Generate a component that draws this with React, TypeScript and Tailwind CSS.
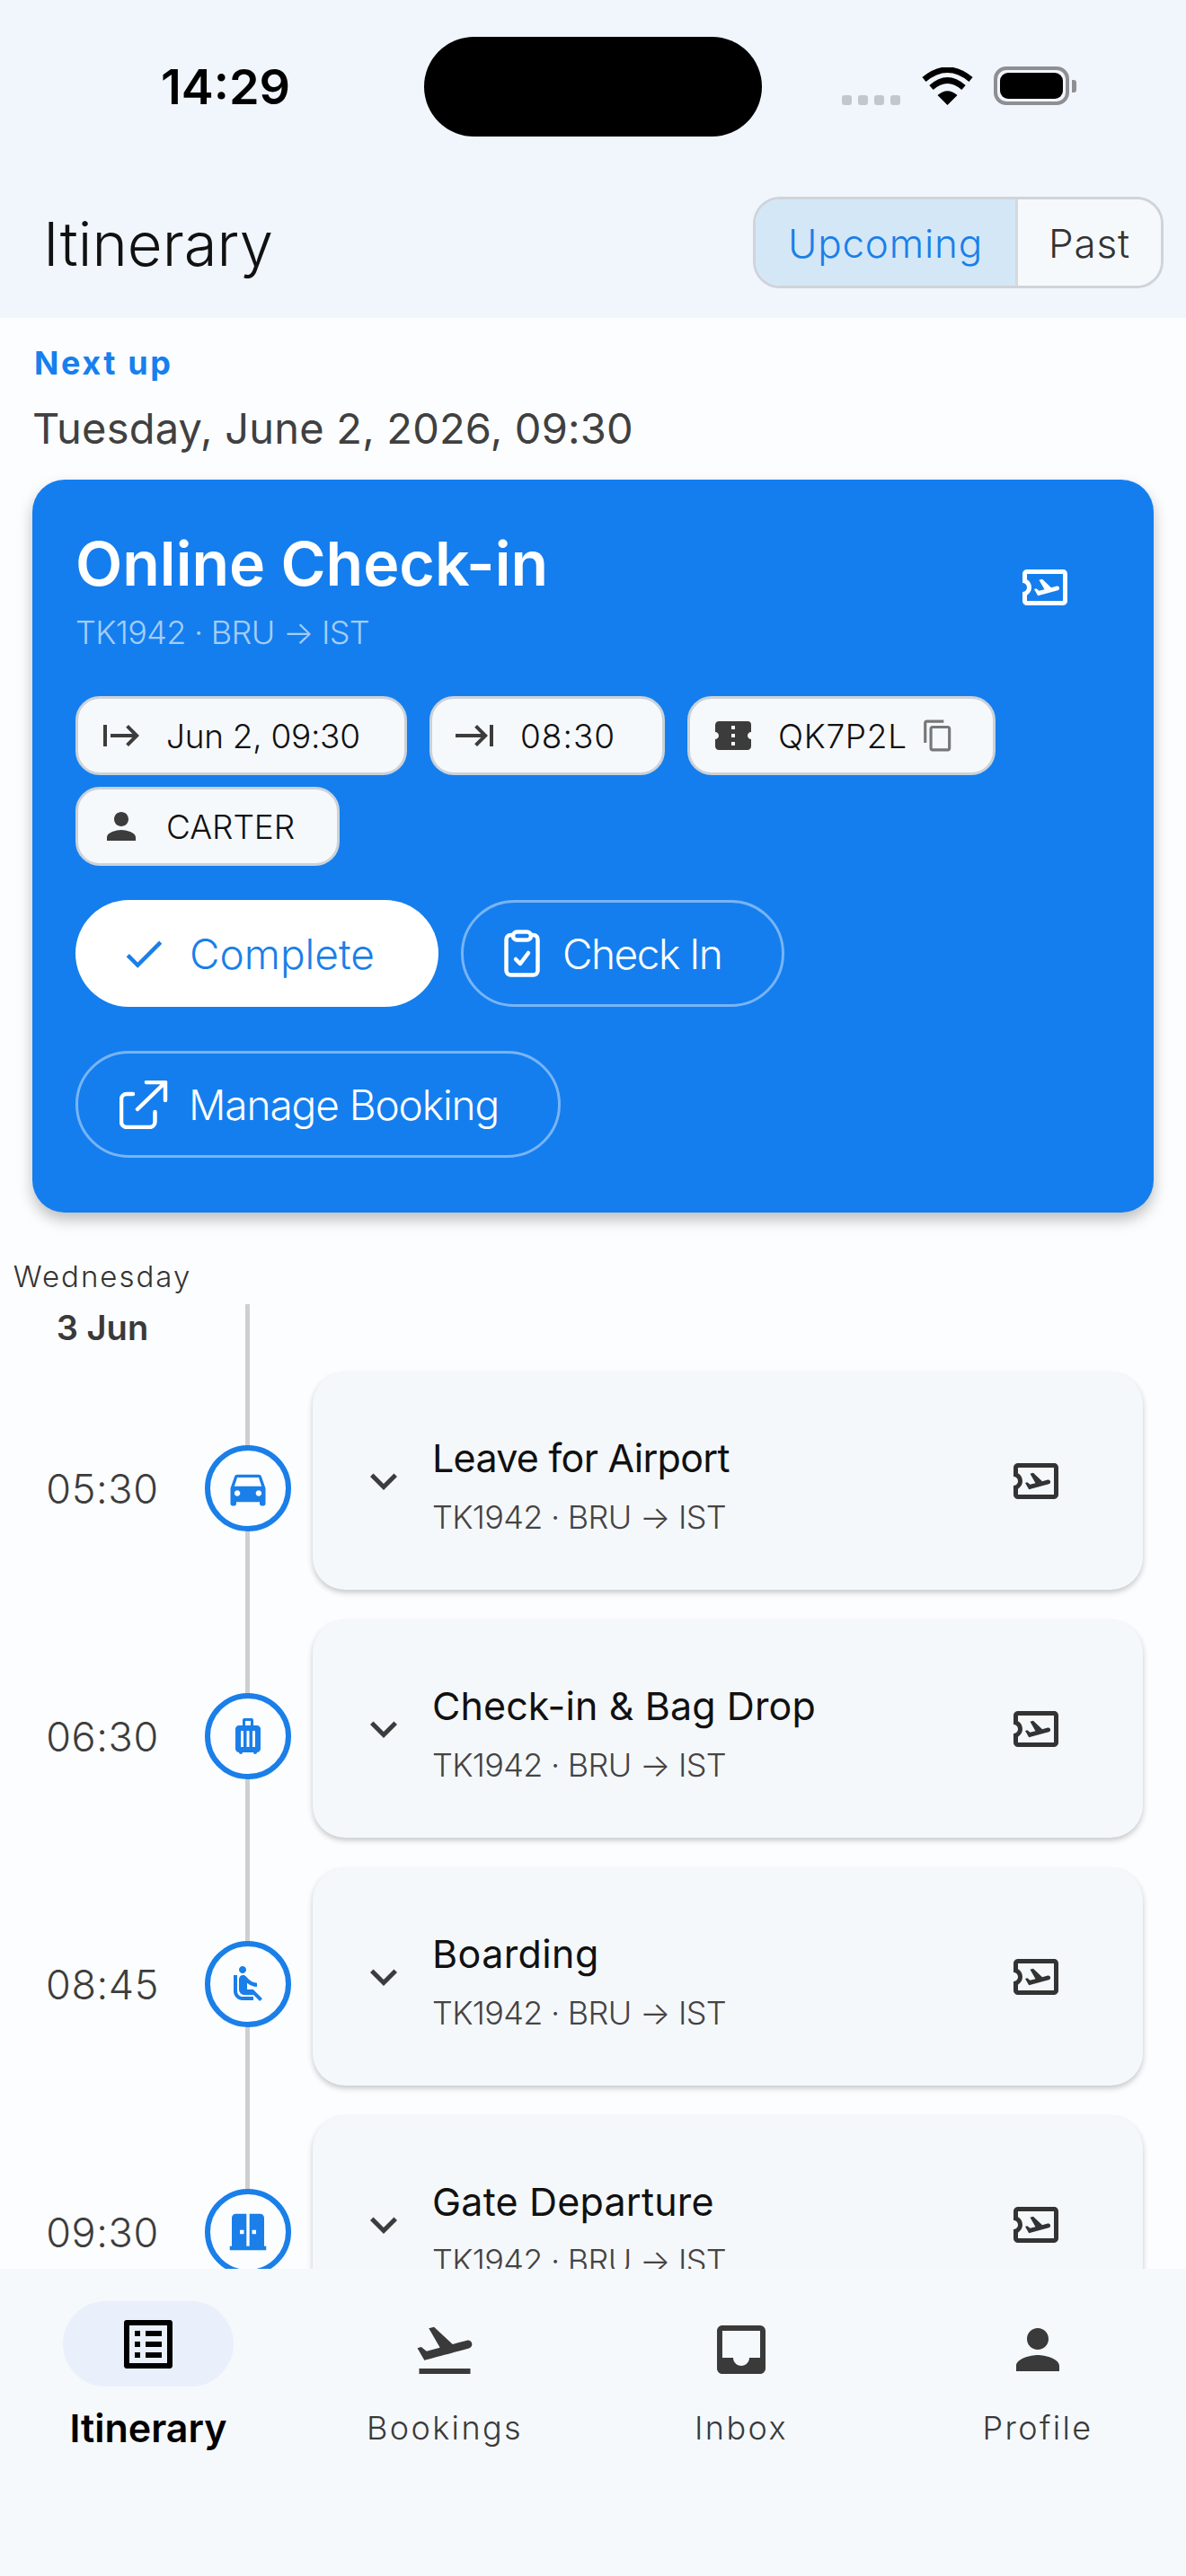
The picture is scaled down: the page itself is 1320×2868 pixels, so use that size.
import React from "react";
import {
  MdOutlineAirplaneTicket, MdStart, MdKeyboardTab, MdConfirmationNumber, MdOutlineContentCopy, MdPerson, MdCheck,
  MdKeyboardArrowDown, MdDirectionsCar, MdLuggage, MdAirlineSeatReclineNormal, MdDoorSliding, MdOutlineListAlt, MdFlightTakeoff, MdInbox,
} from "react-icons/md";

const font = { fontFamily: "Inter, 'Noto Sans', sans-serif" };

function Chip({ icon, text, width, track, extra }: { icon: React.ReactNode; text: string; width: string; track: string; extra?: React.ReactNode }) {
  return (
    <div className={`flex h-[88px] items-center gap-[26px] rounded-[27px] border-[3px] border-[#cbd2d9] bg-[#f6f9fc] pl-[24px] text-[37px] font-light text-[#111] ${width}`}>
      <span className="text-[#3c3c3c]">{icon}</span>
      <span className={`pt-[2px] ${track}`}>{text}</span>
      {extra}
    </div>
  );
}

const stops = [
  { time: "05:30", title: "Leave for Airport", track: "tracking-[-0.7px]", icon: <MdDirectionsCar size={52} /> },
  { time: "06:30", title: "Check-in & Bag Drop", track: "tracking-[0.1px]", icon: <MdLuggage size={48} /> },
  { time: "08:45", title: "Boarding", track: "tracking-[0.4px]", icon: <MdAirlineSeatReclineNormal size={48} /> },
  { time: "09:30", title: "Gate Departure", track: "tracking-[0.2px]", icon: <MdDoorSliding size={54} /> },
];

function Stop({ s }: { s: (typeof stops)[number] }) {
  return (
    <div className="flex items-center">
      <div className="mt-[15px] flex items-center">
        <div className="w-[228px] pt-[2px] text-center text-[45px] font-light leading-[56px] tracking-[0.6px] text-[#3d3d3d]">{s.time}</div>
        <div className="z-10 flex h-[96px] w-[96px] items-center justify-center rounded-full border-[6px] border-[#1a7fe8] bg-[#fcfdff] text-[#1a7fe8]">{s.icon}</div>
      </div>
      <div className="ml-[24px] flex h-[242px] w-[924px] shrink-0 items-center rounded-[36px] bg-[#f5f8fb] pl-[49px] pr-[89px] shadow-[0_3px_6px_rgba(0,0,0,0.22)]">
        <MdKeyboardArrowDown size={60} className="text-[#3c3c3c]" />
        <div className="ml-[24px] flex-1 pt-[9px]">
          <div className={`text-[43px] leading-[56px] text-[#111] ${s.track}`}>{s.title}</div>
          <div className="mt-[14px] text-[36px] font-light leading-[48px] tracking-[-0.7px] text-[#444]">TK1942 · BRU → IST</div>
        </div>
        <MdOutlineAirplaneTicket size={60} className="text-[#333]" />
      </div>
    </div>
  );
}

const tabs = [
  { label: "Itinerary", icon: <MdOutlineListAlt size={72} />, active: true },
  { label: "Bookings", icon: <MdFlightTakeoff size={72} /> },
  { label: "Inbox", icon: <MdInbox size={72} /> },
  { label: "Profile", icon: <MdPerson size={72} /> },
];

export default function App() {
  return (
    <div style={font} className="flex h-[2868px] w-[1320px] flex-col overflow-hidden bg-[#fcfdff]">
      <header className="h-[354px] shrink-0 bg-[#f1f6fc]">
        <div className="flex pt-[41px]">
          <div className="flex h-[111px] w-[472px] items-center justify-center pl-[30px] text-[54px] font-semibold text-black">14:29</div>
          <div className="h-[111px] w-[376px] rounded-[56px] bg-black" />
          <div className="flex h-[76px] items-end pl-[89px]">
            <div className="flex gap-[7px]">
              {[0, 1, 2, 3].map((i) => (
                <span key={i} className="h-[11px] w-[11px] rounded-[3px] bg-[#c3c7cc]" />
              ))}
            </div>
            <svg width="57" height="42" viewBox="0 0 57 42" className="ml-[24px]">
              <path d="M28.5 42 L17.5 31 Q28.5 21.5 39.5 31 Z" fill="#000" />
              <path d="M10.5 22.5 Q28.5 6.5 46.5 22.5" stroke="#000" strokeWidth="6.5" fill="none" />
              <path d="M2.5 13.5 Q28.5 -8 54.5 13.5" stroke="#000" strokeWidth="6.5" fill="none" />
            </svg>
            <div className="ml-[23px] flex items-center">
              <div className="h-[43px] w-[84px] rounded-[14px] border-[4px] border-[#8e8e93] p-[3px]">
                <div className="h-full w-full rounded-[9px] bg-black" />
              </div>
              <div className="ml-[3px] h-[14px] w-[5px] rounded-r-[3px] bg-[#8e8e93]" />
            </div>
          </div>
        </div>
        <div className="mt-[67px] flex items-start justify-between pl-[48px] pr-[25px]">
          <div className="mt-[7px] text-[67px] font-light leading-[92px] text-[#111]">Itinerary</div>
          <div className="flex h-[102px] w-[457px] overflow-hidden rounded-[30px] border-[3px] border-[#cfd4da] text-[44px] font-light">
            <div className="flex w-[289px] items-center justify-center bg-[#d4e7f7] pt-[2px] tracking-[0.8px] text-[#1a7fe8]">Upcoming</div>
            <div className="flex flex-1 items-center justify-center border-l-[3px] border-[#d5d9de] bg-[#f6f9fc] pt-[2px] tracking-[0.8px] text-[#333]">Past</div>
          </div>
        </div>
      </header>

      <main className="min-h-0 flex-1 overflow-hidden">
        <div className="pl-[38px] pt-[26px] text-[36px] font-bold leading-[48px] tracking-[2.6px] text-[#1680ee]">Next up</div>
        <div className="mt-[19px] pl-[36px] text-[47px] font-normal leading-[60px] tracking-[0.2px] text-[#404040]">Tuesday, June 2, 2026, 09:30</div>

        <section className="mx-[36px] mt-[27px] rounded-[36px] bg-[#147eee] pb-[61px] pl-[48px] pt-[53px] shadow-[0_8px_16px_rgba(0,0,0,0.25)]">
          <div className="flex items-start justify-between pr-[91px]">
            <div>
              <div className="text-[68px] font-semibold leading-[80px] text-white">Online Check-in</div>
              <div className="mt-[13px] text-[36px] font-light leading-[48px] tracking-[-0.7px] text-[#a3cdf8]">TK1942 · BRU → IST</div>
            </div>
            <MdOutlineAirplaneTicket size={60} className="mt-[37px] text-white" />
          </div>
          <div className="mt-[47px] flex w-[1100px] flex-wrap gap-x-[25px] gap-y-[13px]">
            <Chip width="w-[369px]" track="tracking-[-0.3px]" icon={<MdStart size={48} />} text="Jun 2, 09:30" />
            <Chip width="w-[262px]" track="tracking-[1px]" icon={<MdKeyboardTab size={48} />} text="08:30" />
            <Chip
              width="w-[343px]"
              track="tracking-[0.7px]"
              icon={<MdConfirmationNumber size={48} />}
              text="QK7P2L"
              extra={<MdOutlineContentCopy size={38} className="-ml-[11px] text-[#777]" />}
            />
            <Chip width="w-[294px]" track="tracking-[-0.1px]" icon={<MdPerson size={48} />} text="CARTER" />
          </div>
          <div className="mt-[38px] flex w-[1100px] flex-wrap gap-x-[25px] gap-y-[49px] text-[46px] font-light">
            <div className="flex h-[119px] w-[404px] items-center gap-[24px] rounded-full bg-white pl-[49px] text-[#1a7fe8]">
              <MdCheck size={54} />
              <span className="pt-[2px]">Complete</span>
            </div>
            <div className="flex h-[119px] w-[360px] items-center gap-[25px] rounded-full border-[3px] border-[#78b4f6] pl-[45px] tracking-[-1.5px] text-white">
              <svg width="40" height="53" viewBox="0 0 40 53" fill="none" stroke="currentColor" strokeWidth="4.5" strokeLinecap="round" strokeLinejoin="round">
                <rect x="2.5" y="6" width="35" height="44.5" rx="5" />
                <rect x="10" y="2.5" width="20" height="9" rx="4.5" fill="#147eee" />
                <path d="M13 33 L18 38 L27 26" />
              </svg>
              <span className="pt-[2px]">Check In</span>
            </div>
            <div className="flex h-[119px] w-[540px] items-center gap-[23px] rounded-full border-[3px] border-[#78b4f6] pl-[46px] tracking-[-1.1px] text-white">
              <svg width="54" height="54" viewBox="0 0 54 54" fill="none" stroke="currentColor" strokeWidth="4.5" strokeLinecap="round" strokeLinejoin="round">
                <path d="M15 15 H8 a6 6 0 0 0 -6 6 V46 a6 6 0 0 0 6 6 H33.5 a6 6 0 0 0 6 -6 V35" />
                <path d="M20 32 L51 2 M30 2 H51 V22" />
              </svg>
              <span className="pt-[2px]">Manage Booking</span>
            </div>
          </div>
        </section>

        <div className="relative mt-[49px]">
          <div className="absolute bottom-0 left-[273px] top-[53px] w-[5px] bg-[#cfcfcf]" />
          <div className="w-[228px] text-center text-[33px] font-light leading-[44px] tracking-[2px] text-[#333]">Wednesday</div>
          <div className="mt-[10px] w-[228px] text-center text-[38px] font-semibold leading-[50px] text-[#3a3a3a]">3 Jun</div>
          <div className="mt-[25px] flex flex-col gap-[34px]">
            {stops.map((s) => (
              <Stop key={s.time} s={s} />
            ))}
          </div>
        </div>
      </main>

      <nav className="z-20 flex h-[342px] shrink-0 bg-[#f5f9fc] pt-[36px]">
        {tabs.map((t) => (
          <div key={t.label} className="flex w-[330px] flex-col items-center">
            <div className={`flex h-[95px] w-[190px] items-center justify-center rounded-full ${t.active ? "bg-[#e9f0fb] text-black" : "text-[#3a3a3a]"}`}>
              <span className={t.active ? "" : "translate-y-[6px]"}>{t.icon}</span>
            </div>
            <div className={`mt-[21px] leading-[50px] ${t.active ? "text-[43px] font-semibold text-black" : "text-[36px] font-light tracking-[2.4px] text-[#3a3a3a]"}`}>{t.label}</div>
          </div>
        ))}
      </nav>
    </div>
  );
}
